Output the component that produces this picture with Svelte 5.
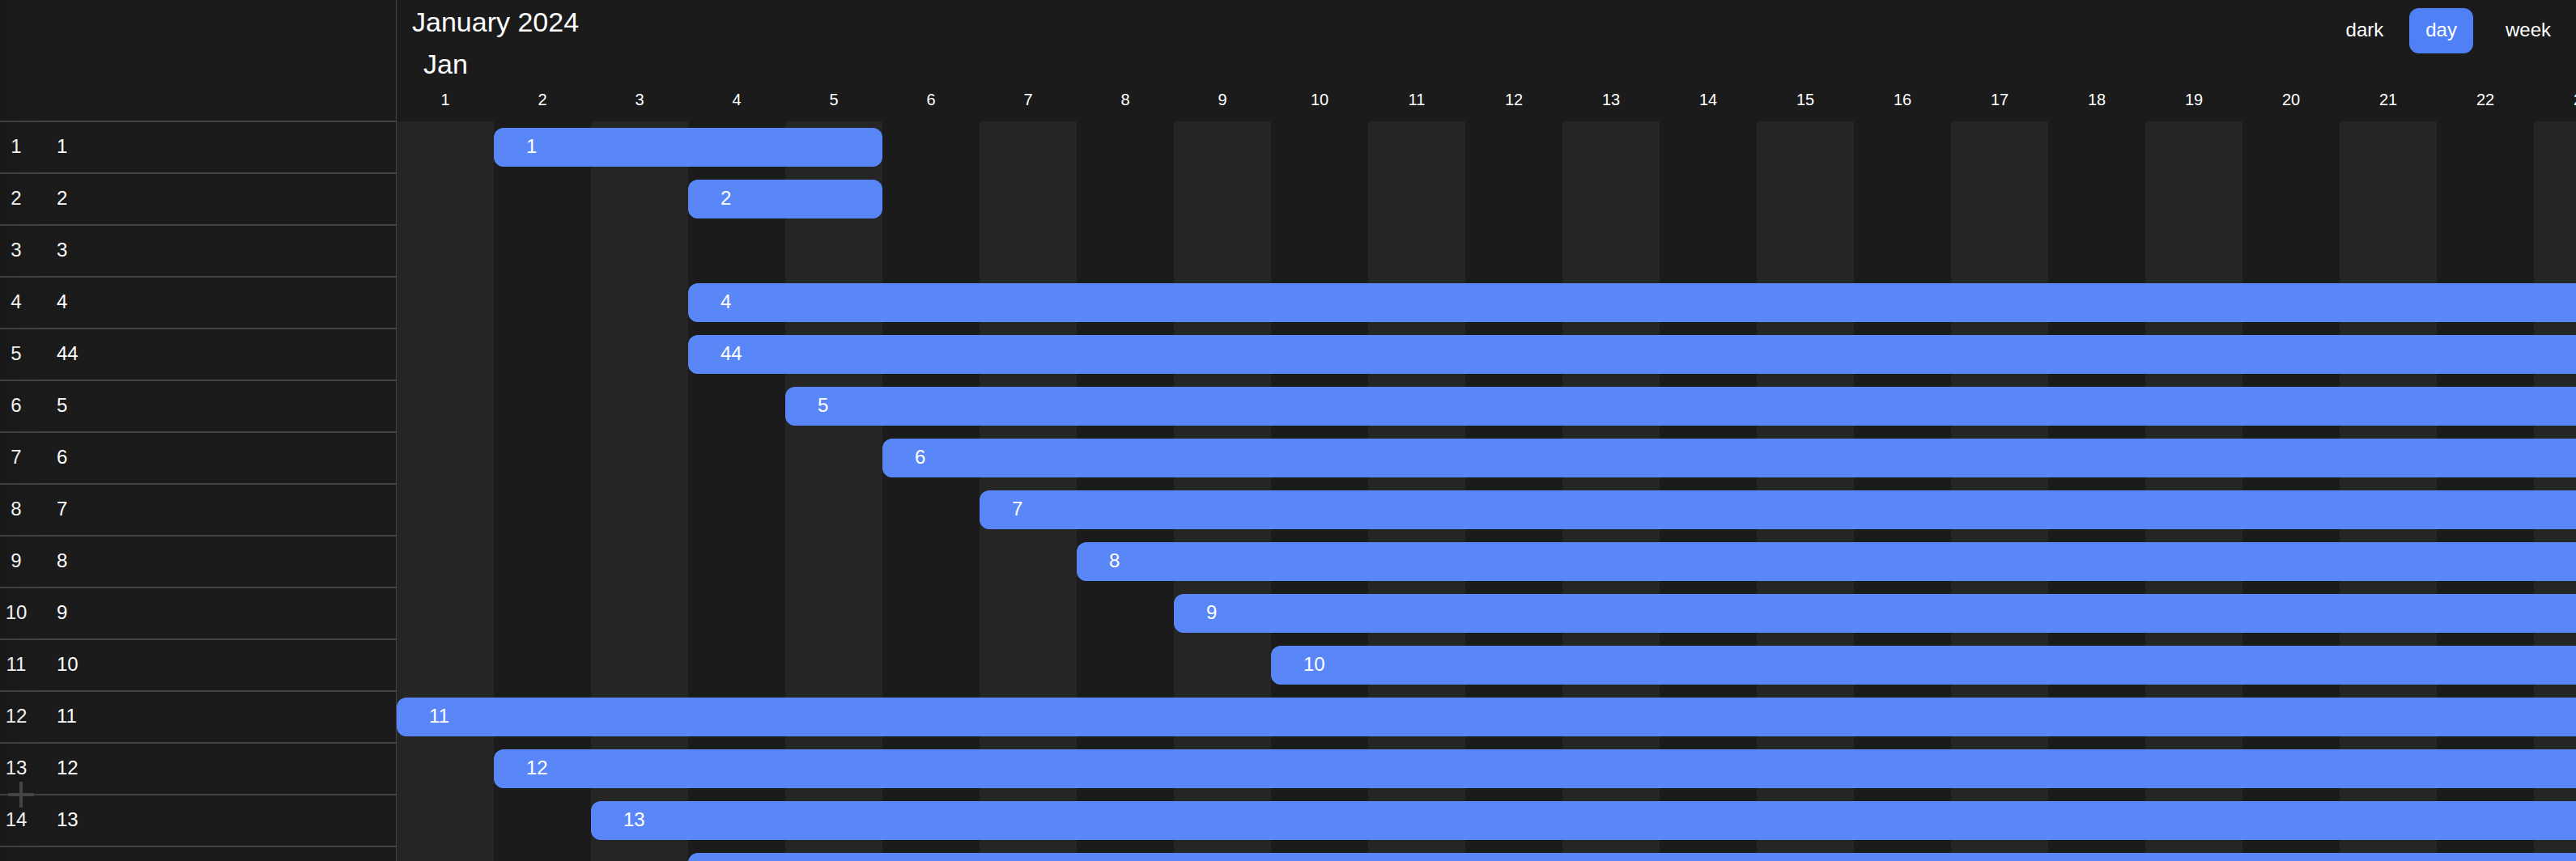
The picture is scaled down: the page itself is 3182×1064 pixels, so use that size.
<script>
  const days = Array.from({ length: 31 }, (_, i) => i + 1);
  const tasks = [
    { name: '1', start: 2, end: 6 },
    { name: '2', start: 4, end: 6 },
    { name: '3' },
    { name: '4', start: 4, end: 32 },
    { name: '44', start: 4, end: 32 },
    { name: '5', start: 5, end: 32 },
    { name: '6', start: 6, end: 32 },
    { name: '7', start: 7, end: 32 },
    { name: '8', start: 8, end: 32 },
    { name: '9', start: 9, end: 32 },
    { name: '10', start: 10, end: 32 },
    { name: '11', start: 1, end: 32 },
    { name: '12', start: 2, end: 32 },
    { name: '13', start: 3, end: 32 },
    { name: '14', start: 4, end: 32 },
  ];
  let view = $state('day');
</script>

<div class="gantt">
  <aside class="side">
    <table>
      <tbody>
        {#each tasks as task, i}
          <tr>
            <td class="index">{i + 1}</td>
            <td class="name">{task.name}</td>
          </tr>
        {/each}
      </tbody>
    </table>
    <div class="shade"></div>
    <button class="add" aria-label="Add task">
      <svg width="32" height="32" viewBox="0 0 32 32" aria-hidden="true">
        <path d="M16 0V32M0 16H32" stroke="#444" stroke-width="4" />
      </svg>
    </button>
  </aside>

  <main class="chart">
    <header>
      <h1>January 2024</h1>
      <h2>Jan</h2>
      <div class="days">
        {#each days as day}<span>{day}</span>{/each}
      </div>
    </header>
    <div class="rows">
      {#each tasks as task}
        <div class="row">
          {#if task.start}
            <div class="bar" style="grid-column: {task.start} / {task.end}">{task.name}</div>
          {/if}
        </div>
      {/each}
    </div>
    <nav class="tools">
      <button class="theme">dark</button>
      <button class:active={view === 'day'} onclick={() => (view = 'day')}>day</button>
      <button class:active={view === 'week'} onclick={() => (view = 'week')}>week</button>
    </nav>
  </main>
</div>

<style>
  :global(body) {
    background: #1b1b1b;
  }
  .gantt {
    display: flex;
    height: 100vh;
    overflow: hidden;
    background: #1b1b1b;
    color: #fff;
    font: 24px/32px 'Liberation Sans', Arial, sans-serif;
  }
  .side {
    position: relative;
    box-sizing: border-box;
    flex: 0 0 490px;
    padding-top: 149px;
    border-right: 1px solid #444;
  }
  table {
    width: 100%;
    border-collapse: separate;
    border-spacing: 0;
    border-top: 2px solid #444;
  }
  td {
    box-sizing: border-box;
    height: 64px;
    padding: 0 0 2px;
    border-bottom: 2px solid #444;
  }
  .index {
    width: 40px;
    text-align: center;
  }
  .name {
    padding-left: 30px;
  }
  .shade {
    position: absolute;
    inset: 0 auto 0 0;
    width: 48px;
    background: linear-gradient(90deg, rgba(0, 0, 0, 0.1), rgba(0, 0, 0, 0));
    pointer-events: none;
  }
  button {
    border: 0;
    background: none;
    color: inherit;
    font: inherit;
    cursor: pointer;
  }
  .add {
    position: absolute;
    left: 10px;
    bottom: 66px;
    display: flex;
    padding: 0;
  }
  .chart {
    position: relative;
    flex: 1;
    min-width: 0;
    overflow: hidden;
  }
  header {
    box-sizing: border-box;
    height: 150px;
    padding-top: 1px;
  }
  h1,
  h2 {
    margin: 0;
    font-size: 34px;
    font-weight: 400;
    line-height: 52px;
  }
  h1 {
    padding-left: 19px;
  }
  h2 {
    padding-left: 33px;
  }
  .days,
  .row {
    display: grid;
    grid-template-columns: repeat(31, 120px);
  }
  .days {
    font-size: 20px;
    line-height: 36px;
    text-align: center;
  }
  .rows {
    width: 3720px;
    min-height: 100%;
    background: repeating-linear-gradient(90deg, #252525 0 120px, #1b1b1b 120px 240px);
  }
  .row {
    height: 64px;
  }
  .bar {
    height: 48px;
    margin-top: 8px;
    box-sizing: border-box;
    padding-left: 40px;
    border-radius: 12px;
    background: #5a87f8;
    line-height: 46px;
  }
  .tools {
    position: absolute;
    top: 10px;
    right: 11px;
    display: flex;
    gap: 20px;
  }
  .tools button {
    height: 56px;
    padding: 0 20px 2px;
    border-radius: 12px;
  }
  .tools .theme {
    margin-right: -8px;
  }
  .tools .active {
    background: #4f80f6;
  }
</style>
